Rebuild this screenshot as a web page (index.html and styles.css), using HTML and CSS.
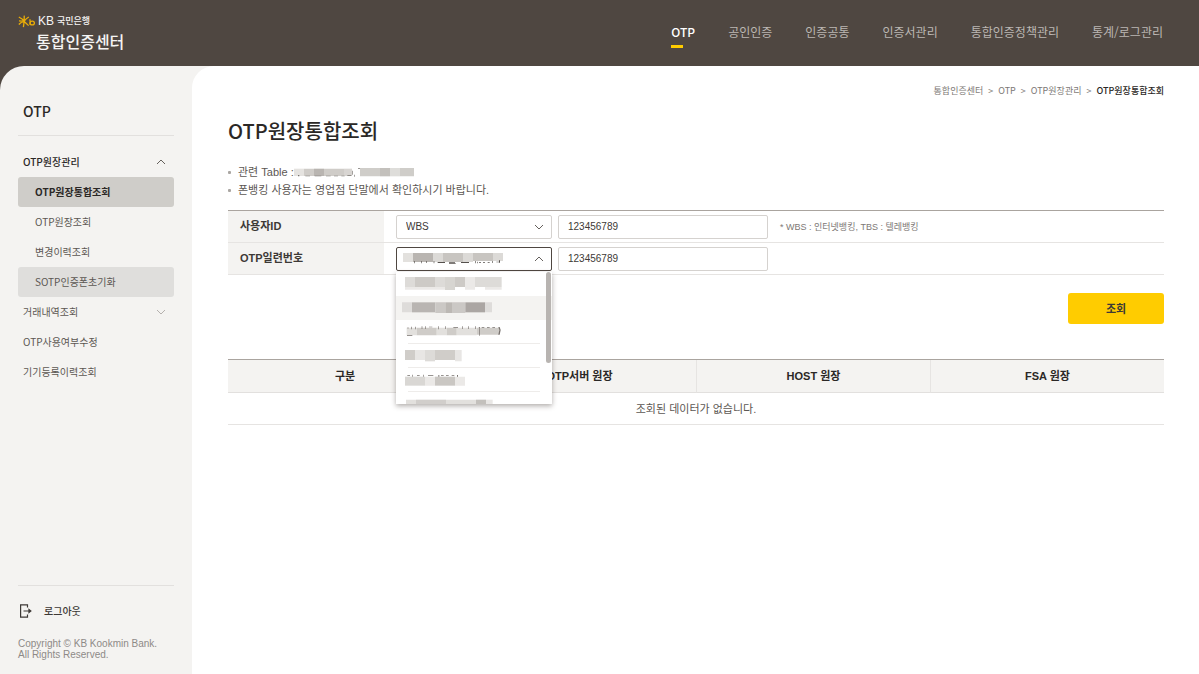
FILE: index.html
```html
<!DOCTYPE html>
<html lang="ko">
<head>
<meta charset="utf-8">
<meta name="viewport" content="width=device-width, initial-scale=1">
<title>OTP원장통합조회</title>
<link rel="stylesheet" href="styles.css">
</head>
<body>
<header class="header">
  <a class="logo" href="#">
    <span class="logo-top">
      <svg class="logo-mark" viewBox="0 0 18 13" aria-hidden="true"><g fill="none" stroke="#e9ad08" stroke-width="1.300"><path d="M.8 2 Q5 4 6 6.300 Q3 7 .8 9.500M6.200 .6 Q6.600 6 5.400 12.200M10.800 2 Q8 3.500 6 6.300 L10.600 10.600M1 5.800 L6 6.300"/><path d="M11.800 4.200 Q12.600 6.500 12 9.800"/><ellipse cx="14.200" cy="8" rx="2.200" ry="1.900"/></g></svg>
      <span class="logo-kb">KB</span><span class="logo-bank">국민은행</span>
    </span>
    <span class="logo-name">통합인증센터</span>
  </a>
  <nav class="gnb">
    <a class="gnb-link is-active" href="#">OTP</a>
    <a class="gnb-link" href="#">공인인증</a>
    <a class="gnb-link" href="#">인증공통</a>
    <a class="gnb-link" href="#">인증서관리</a>
    <a class="gnb-link" href="#">통합인증정책관리</a>
    <a class="gnb-link" href="#">통계/로그관리</a>
  </nav>
</header>
<div class="shell">
  <aside class="side">
    <h2 class="side-title">OTP</h2>
    <nav class="lnb">
      <a class="lnb-link is-open" href="#">OTP원장관리 <svg class="chev" viewBox="0 0 10 6" aria-hidden="true"><path d="M1 5 5 1 9 5"/></svg></a>
      <a class="lnb-link sub is-current" href="#">OTP원장통합조회</a>
      <a class="lnb-link sub" href="#">OTP원장조회</a>
      <a class="lnb-link sub" href="#">변경이력조회</a>
      <a class="lnb-link sub is-hover" href="#">SOTP인증폰초기화</a>
      <a class="lnb-link" href="#">거래내역조회 <svg class="chev pale" viewBox="0 0 10 6" aria-hidden="true"><path d="M1 1 5 5 9 1"/></svg></a>
      <a class="lnb-link" href="#">OTP사용여부수정</a>
      <a class="lnb-link" href="#">기기등록이력조회</a>
    </nav>
    <div class="side-foot">
      <button class="logout" type="button"><svg class="logout-icon" viewBox="0 0 13 14" aria-hidden="true"><path d="M8.500 3.500V.9H1.600v12.200h6.900v-2.600M4.500 7h6.500"/><path class="head" d="M9.400 4.200 12.800 7 9.400 9.800z"/></svg>로그아웃</button>
      <p class="copy">Copyright © KB Kookmin Bank.<br>All Rights Reserved.</p>
    </div>
  </aside>
  <main class="main">
    <nav class="crumbs" aria-label="위치">
      <a href="#">통합인증센터</a><span>&gt;</span><a href="#">OTP</a><span>&gt;</span><a href="#">OTP원장관리</a><span>&gt;</span><b>OTP원장통합조회</b>
    </nav>
    <h1 class="title">OTP원장통합조회</h1>
    <ul class="notes">
      <li>관련 Table :<svg class="mask mask-note" viewBox="0 0 360 27" aria-hidden="true"><path fill="#e5e3e0" d="M0 2h30v22H0z"/><path fill="#cfccc8" d="M30 2h30v22H30zM90 2h60v22H90z"/><path fill="#b9b5b1" d="M60 2h30v22H60z"/><path fill="#d8d5d2" d="M150 2h24v22h-24z"/><path fill="#77736f" d="M12 21h4v4h-4zM34 23h14v2H34zM62 23h20v2H62zM96 23h14v2H96zM120 23h12v2h-12zM142 23h10v2h-10zM160 22h12v2h-12zM174 8h2v12h-2zM181 20h2v6h-2zM192 1h10v2h-10z"/><path fill="#cfcdc9" d="M198 0h60v25h-60zM318 0h42v25h-42z"/><path fill="#c3c0bc" d="M258 0h30v25h-30z"/><path fill="#deddda" d="M288 0h30v25h-30z"/></svg></li>
      <li>폰뱅킹 사용자는 영업점 단말에서 확인하시기 바랍니다.</li>
    </ul>
    <form class="search">
      <div class="row">
        <label class="row-head" for="uid">사용자ID</label>
        <div class="row-body">
          <div class="pick"><select class="field" id="utype" aria-label="사용자 구분"><option>WBS</option><option>TBS</option></select><svg class="chev" viewBox="0 0 10 6" aria-hidden="true"><path d="M1 1 5 5 9 1"/></svg></div>
          <input class="field text" id="uid" type="text" value="123456789">
          <span class="hint">* WBS : 인터넷뱅킹, TBS : 텔레뱅킹</span>
        </div>
      </div>
      <div class="row">
        <label class="row-head" for="serial">OTP일련번호</label>
        <div class="row-body">
          <div class="pick">
            <button class="field is-open" type="button" aria-haspopup="listbox" aria-expanded="true" aria-label="OTP 제조사"><svg class="mask mask-value" viewBox="0 0 303 33" aria-hidden="true"><path fill="#e3e1de" d="M0 0h30v27H0z"/><path fill="#b9b5b1" d="M30 0h60v27H30z"/><path fill="#dcdad7" d="M90 0h30v27H90zM180 0h30v27h-30zM270 0h30v24h-30z"/><path fill="#c8c5c1" d="M120 0h60v27h-60zM210 0h60v24h-60z"/><path fill="#55504c" d="M34 24h2v7h-2zM54 24h2v7h-2zM70 24h2v6h-2zM92 24h2v7h-2zM104 27h22v3h-22zM138 27h18v2h-18zM138 31h20v2h-20zM174 27h24v3h-24zM216 24h2v7h-2zM222 26h2v5h-2zM228 28h6v2h-6zM240 28h6v2h-6zM254 28h6v2h-6zM268 24h2v6h-2zM280 26h8v2h-8zM288 22h3v7h-3z"/></svg></button>
            <svg class="chev" viewBox="0 0 10 6" aria-hidden="true"><path d="M1 5 5 1 9 5"/></svg>
            <div class="menu" role="listbox" aria-label="OTP 제조사 목록">
              <div class="opt" role="option"><svg class="mask" viewBox="0 0 300 39" aria-hidden="true"><path fill="#dddbd8" d="M0 0h30v30H0zM90 0h30v30H90zM210 0h80v30h-80z"/><path fill="#cdcac6" d="M30 0h60v30H30zM150 0h30v30h-30z"/><path fill="#d7d5d1" d="M120 0h30v39h-30z"/><path fill="#ebe9e7" d="M0 30h120v8H0zM180 0h30v38h-30zM240 30h50v8h-50z"/></svg></div>
              <div class="opt is-hover" role="option"><svg class="mask" viewBox="0 0 300 39" aria-hidden="true"><path fill="#dedcda" d="M-9 4h30v30h-30zM240 4h21v30h-21z"/><path fill="#b9b5b2" d="M21 4h70v30H21z"/><path fill="#cbc8c5" d="M91 4h30v32H91zM141 4h40v32h-40z"/><path fill="#bcb8b4" d="M121 4h20v32h-20z"/><path fill="#aba6a3" d="M181 4h59v30h-59z"/></svg></div>
              <div class="opt" role="option"><svg class="mask" viewBox="0 0 300 39" aria-hidden="true"><path fill="#e2e0dd" d="M5 8h30v23H5zM95 8h30v23H95zM155 8h60v23h-60z"/><path fill="#cfccc8" d="M35 8h60v23H35zM125 8h30v23h-30zM215 8h68v21h-68z"/><path fill="#77716d" d="M6 8h6v2H6zM18 5h2v8h-2zM6 31h16v2H6zM31 5h2v8h-2zM50 4h2v8h-2zM61 4h2v8h-2zM72 5h10v2H72zM100 4h2v9h-2zM121 4h2v8h-2zM145 6h14v2h-14zM171 4h2v8h-2zM190 4h2v8h-2zM210 4h2v8h-2zM220 6h5v26h-2V8zM230 6h8v2h-8zM246 6h8v2h-8zM262 6h8v2h-8zM280 6h4l3 9-3 14h-4l3-14z"/></svg></div>
              <div class="opt" role="option"><svg class="mask" viewBox="0 0 300 39" aria-hidden="true"><path fill="#d0cdc9" d="M0 3h30v30H0zM90 3h60v30H90z"/><path fill="#e8e6e4" d="M30 3h30v30H30zM150 3h20v34h-20z"/><path fill="#dddbd8" d="M60 3h30v34H60z"/></svg></div>
              <div class="opt" role="option"><svg class="mask" viewBox="0 0 300 39" aria-hidden="true"><path fill="#d9d7d4" d="M0 11h60v27H0z"/><path fill="#ebe9e7" d="M60 11h30v27H60zM150 11h30v27h-30z"/><path fill="#cac7c3" d="M90 11h60v27H90z"/><path fill="#77716d" d="M7 7h8v2H7zM22 5h2v6h-2zM36 7h8v2h-8zM55 5h2v6h-2zM69 7h16v2H69zM100 6h3v5h-3zM108 7h8v2h-8zM123 7h8v2h-8zM140 7h8v2h-8zM156 6h3v5h-3z"/></svg></div>
              <div class="opt" role="option"><svg class="mask" viewBox="0 0 300 39" aria-hidden="true"><path fill="#e2e0dd" d="M3 8h30v30H3zM123 8h90v30h-90z"/><path fill="#d1cecb" d="M33 8h90v30H33z"/><path fill="#c3c0bc" d="M213 8h30v30h-30z"/><path fill="#e9e7e5" d="M243 8h20v30h-20z"/></svg></div>
              <span class="thumb"></span>
            </div>
          </div>
          <input class="field text" id="serial" type="text" value="123456789">
        </div>
      </div>
      <div class="actions"><button class="submit" type="button">조회</button></div>
    </form>
    <table class="result">
      <thead><tr><th>구분</th><th>OTP서버 원장</th><th>HOST 원장</th><th>FSA 원장</th></tr></thead>
      <tbody><tr><td colspan="4">조회된 데이터가 없습니다.</td></tr></tbody>
    </table>
  </main>
</div>
</body>
</html>
```
FILE: styles.css
```css
* { box-sizing: border-box; }
body {
  margin: 0;
  min-height: 100vh;
  display: flex;
  flex-direction: column;
  background: #4f4741;
  color: #5c5753;
  font-family: "Liberation Sans", "Noto Sans CJK KR", sans-serif;
  font-size: 11px;
  line-height: 18px;
}
a { color: inherit; text-decoration: none; }
button, input, select { font: inherit; color: inherit; margin: 0; }

.header {
  display: flex;
  justify-content: space-between;
  height: 66px;
  padding: 13px 36px 0 18px;
  font-family: "Noto Sans CJK KR", sans-serif;
}
.logo { display: flex; flex-direction: column; color: #f5f4f3; }
.logo-top { display: flex; align-items: center; height: 16px; }
.logo-mark { width: 18px; height: 13px; margin-right: 2px; }
.logo-kb { font-family: "Liberation Sans", sans-serif; font-size: 12px; margin-right: 3px; }
.logo-bank { font-size: 9px; font-weight: 500; }
.logo-name { padding-left: 18px; font-size: 16px; font-weight: 500; line-height: 24px; }
.gnb { display: flex; gap: 33px; padding-top: 10px; }
.gnb-link { height: 25px; font-size: 12px; color: #bcb7b3; }
.gnb-link.is-active { color: #fff; font-weight: 500; }
.gnb-link.is-active::after { content: ""; display: block; width: 12px; height: 3px; margin-top: 4px; background: #ffcc00; }

.shell {
  flex: 1;
  display: flex;
  background: #f4f3f1;
  border-top-left-radius: 24px;
}
.side {
  flex: none;
  width: 192px;
  display: flex;
  flex-direction: column;
  padding: 33px 18px 14px;
  font-family: "Noto Sans CJK KR", sans-serif;
}
.side-title {
  margin: 0 0 11px;
  padding: 0 5px 12px;
  border-bottom: 1px solid #e2e0de;
  color: #2b2826;
  font-size: 14px;
  font-weight: 500;
  line-height: 24px;
}
.lnb { display: flex; flex-direction: column; }
.lnb-link {
  display: flex;
  align-items: center;
  justify-content: space-between;
  height: 30px;
  padding: 0 8px 0 5px;
  border-radius: 3px;
  font-size: 10px;
}
.lnb-link.sub { padding-left: 17px; }
.lnb-link.is-open { color: #2b2826; font-weight: 500; }
.lnb-link.is-current { background: #cfcdc9; color: #2b2826; font-weight: 700; }
.lnb-link.is-hover { background: #dfdedc; }
.chev { width: 10px; height: 6px; fill: none; stroke: #65605c; stroke-width: 1; }
.chev.pale { stroke: #b5b1ae; }
.side-foot { margin-top: auto; border-top: 1px solid #e2e0de; padding-top: 16px; }
.logout {
  display: flex;
  align-items: center;
  gap: 12px;
  padding: 0 1px;
  border: 0;
  background: none;
  color: #3d3936;
  font-size: 10px;
  font-weight: 500;
}
.logout-icon { width: 13px; height: 14px; fill: none; stroke: #3d3936; stroke-width: 1.2; }
.logout-icon .head { fill: #3d3936; stroke: none; }
.copy { margin: 18px -10px 0 0; font-family: "Liberation Sans", sans-serif; font-size: 10px; line-height: 11px; color: #8e8a87; }

.main {
  flex: 1;
  min-width: 0;
  padding: 16px 35px 40px 36px;
  background: #fff;
  border-top-left-radius: 22px;
}
.crumbs { display: flex; justify-content: flex-end; gap: 5px; font-family: "Noto Sans CJK KR", sans-serif; font-size: 9px; color: #7d7875; }
.crumbs b { font-weight: 500; color: #2b2826; }
.title { margin: 16px 0 17px; font-family: "Noto Sans CJK KR", sans-serif; font-size: 20px; font-weight: 500; line-height: 30px; color: #2b2826; }
.notes { margin: 0 0 11px; padding: 0; list-style: none; }
.notes li { display: flex; align-items: center; white-space: pre; height: 18px; }
.notes li::before { content: ""; width: 3px; height: 3px; margin-right: 7px; background: #aaa6a2; border-radius: 1px; }
.mask { display: block; width: 100px; height: 13px; overflow: visible; }
.mask-note { width: 120px; height: 9px; }
.mask-value { width: 101px; height: 11px; }

.search { border-top: 1px solid #aaa49f; }
.row { display: flex; height: 32px; border-bottom: 1px solid #e6e4e2; }
.row-head { width: 156px; padding: 6px 12px 0; background: #f4f3f1; color: #3d3936; font-weight: 700; }
.row-body { display: flex; align-items: center; padding-left: 12px; }
.pick { position: relative; width: 156px; margin-right: 6px; }
.pick > .chev { position: absolute; right: 8px; top: 9px; pointer-events: none; }
.field {
  display: block;
  width: 100%;
  height: 24px;
  padding: 0 9px;
  border: 1px solid #d5d2cf;
  border-radius: 2px;
  background: #fff;
  color: #3d3936;
  font-size: 10px;
  appearance: none;
}
.field.text { width: 210px; }
.field.is-open { padding: 0 6px; border-color: #4f4741; }
.hint { margin-left: 12px; font-size: 9px; color: #7d7875; }
.menu {
  position: absolute;
  top: 25px;
  left: 0;
  z-index: 2;
  width: 156px;
  height: 132px;
  overflow: hidden;
  background: #fff;
  box-shadow: 0 2px 5px rgba(60, 50, 45, 0.4);
}
.opt { position: relative; height: 24px; padding: 5px 9px; }
.opt.is-hover { background: #f4f3f1; }
.opt:not(.is-hover):not(:first-child)::after { content: ""; position: absolute; left: 12px; right: 12px; bottom: 0; border-bottom: 1px solid #eeecea; }
.thumb { position: absolute; top: 0; right: 1px; width: 5px; height: 91px; border-radius: 3px; background: #b8b4b1; }
.actions { display: flex; justify-content: flex-end; padding: 18px 0 35px; }
.submit { width: 96px; height: 31px; border: 0; border-radius: 3px; background: #ffcc00; color: #3d3936; font-weight: 700; }

.result { width: 100%; table-layout: fixed; border-collapse: separate; border-spacing: 0; border-top: 1px solid #aaa49f; }
.result th { height: 33px; padding: 0; border-bottom: 1px solid #e2e0de; background: #f4f3f1; color: #2b2826; font-weight: 700; }
.result th + th { border-left: 1px solid #e6e4e2; }
.result td { height: 32px; padding: 0; border-bottom: 1px solid #e6e4e2; text-align: center; }
```
